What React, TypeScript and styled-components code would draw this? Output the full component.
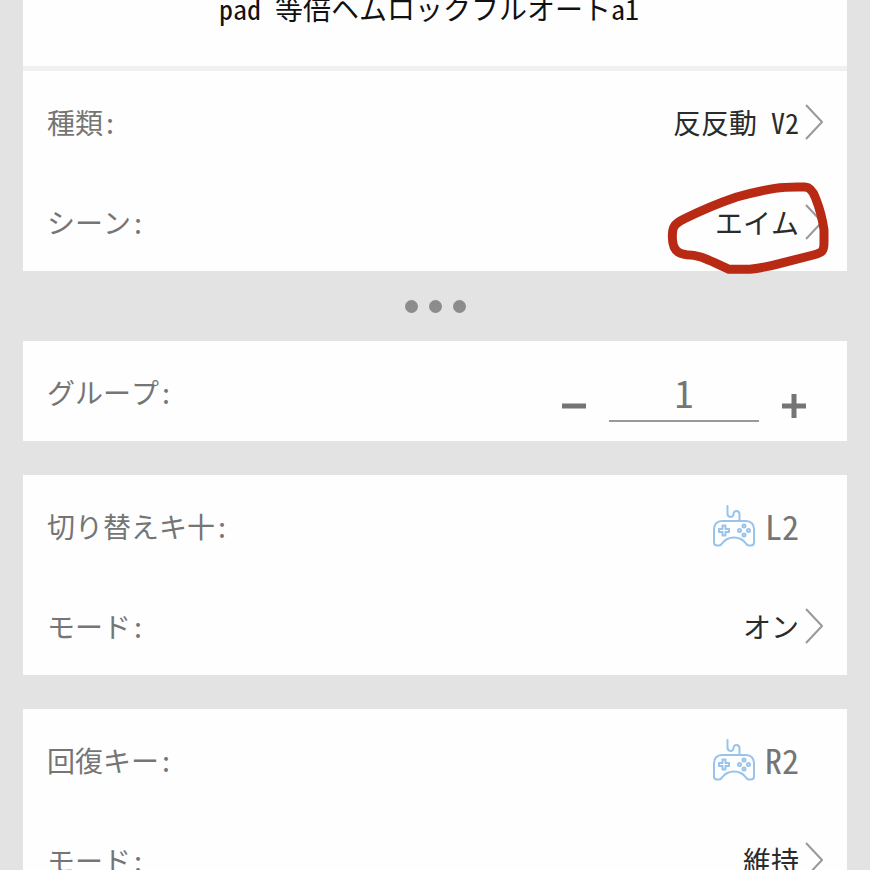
import React, { useState } from "react";
import styled, { createGlobalStyle } from "styled-components";

const GlobalStyle = createGlobalStyle`
  *, *::before, *::after { box-sizing: border-box; }
  html { scrollbar-width: none; }
  body {
    margin: 0;
    background: #e3e3e3;
    font-family: "Noto Sans Mono CJK JP", "Noto Sans CJK JP", "Liberation Mono", sans-serif;
    font-size: 28px;
    color: #2b2b2b;
  }
  button, input { font: inherit; color: inherit; border: 0; padding: 0; background: none; }
  button { cursor: pointer; }
`;

const Page = styled.main`
  height: 100vh;
  padding: 0 23px;
  overflow: hidden auto;
  scrollbar-width: none;
`;

const Card = styled.section`
  background: #fefefe;
  margin-bottom: 34px;
`;

const TopCard = styled(Card)`
  margin-bottom: 0;
`;

const Title = styled.h1`
  margin: 0;
  height: 71px;
  border-bottom: 5px solid #f0f0f0;
  font-size: 28px;
  font-weight: 400;
  line-height: 16px;
  text-align: center;
  color: #111;
  padding-right: 12px;
`;

const Row = styled.div`
  position: relative;
  display: flex;
  align-items: center;
  justify-content: space-between;
  height: 100px;
  padding: 2px 24px 0;
`;

const Label = styled.label`
  color: #757575;
  line-height: 40px;
`;

const Picker = styled.button`
  display: flex;
  align-items: center;
  gap: 6px;
  line-height: 40px;
`;

const KeyButton = styled.button`
  display: flex;
  align-items: center;
  gap: 10px;
  margin-right: 24px;
  font-size: 34px;
  line-height: 40px;
  color: #757575;
`;

const More = styled.button`
  display: flex;
  align-items: center;
  justify-content: center;
  gap: 11px;
  width: 100%;
  height: 70px;
`;

const Dot = styled.span`
  width: 13px;
  height: 13px;
  border-radius: 50%;
  background: #8c8c8c;
`;

const Stepper = styled.div`
  display: flex;
  align-self: flex-end;
  align-items: flex-end;
  gap: 23px;
  margin: 0 17px 19px 0;
  color: #757575;
`;

const StepButton = styled.button`
  display: flex;
  align-items: center;
  width: 24px;
  height: 32px;
`;

const NumberField = styled.input`
  width: 150px;
  height: 56px;
  && { padding-bottom: 4px; }
  border-bottom: 2px solid #999;
  border-radius: 0;
  font-size: 38px;
  line-height: 50px;
  text-align: center;
  outline: none;
`;

const Marker = styled.svg`
  position: absolute;
  top: 9px;
  right: 18px;
  pointer-events: none;
`;

function Chevron() {
  return (
    <svg width="18" height="36" viewBox="0 0 18 36" fill="none" stroke="#999" strokeWidth="2" aria-hidden="true">
      <path d="M1 1 17 18 1 35" />
    </svg>
  );
}

function Gamepad() {
  return (
    <svg width="42" height="42" viewBox="0 0 42 42" fill="none" stroke="#97c3ec" strokeWidth="2" strokeLinecap="round" strokeLinejoin="round" aria-hidden="true">
      <path d="M14.500 1V8.500C14.500 13 20.500 13 20.500 9C20.500 5 26.500 5 26.500 9.500V16" />
      <path d="M9 16H33C38 16 41 19.500 41 24V37.500Q41 40.500 38 40.500H36Q34 40.500 33 38.500C30 34.500 26 32.500 21 32.500S12 34.500 9 38.500Q8 40.500 6 40.500H4Q1 40.500 1 37.500V24C1 19.500 4 16 9 16Z" />
      <path d="M9.500 20.500h3v3.500h3.500v3h-3.500v3.500h-3V27H6v-3h3.500Z" />
      <circle cx="31" cy="21" r="1.500" />
      <circle cx="31" cy="30" r="1.500" />
      <circle cx="26.500" cy="25.500" r="1.500" />
      <circle cx="35.500" cy="25.500" r="1.500" />
    </svg>
  );
}

function PickerRow({ id, label, value, children }: { id: string; label: string; value: string; children?: React.ReactNode }) {
  return (
    <Row>
      <Label htmlFor={id}>{label}</Label>
      <Picker id={id} type="button">
        {value}
        <Chevron />
      </Picker>
      {children}
    </Row>
  );
}

function KeyRow({ id, label, value }: { id: string; label: string; value: string }) {
  return (
    <Row>
      <Label htmlFor={id}>{label}</Label>
      <KeyButton id={id} type="button">
        <Gamepad />
        {value}
      </KeyButton>
    </Row>
  );
}

export default function App() {
  const [group, setGroup] = useState(1);
  return (
    <>
      <GlobalStyle />
      <Page>
        <TopCard>
          <Title>pad 等倍ヘムロックフルオートa1</Title>
          <PickerRow id="kind" label="種類:" value="反反動 V2" />
          <PickerRow id="scene" label="シーン:" value="エイム">
            <Marker width="163" height="96" viewBox="48 270 489 288" fill="none" stroke="#b92a14" strokeWidth="27" strokeLinejoin="round" aria-hidden="true">
              <path d="M465 291C430 290 400 291 375 295Q320 304 260 321Q180 348 100 388C70 402 67 415 67 440C67 475 80 492 110 494C150 494 170 508 237 538H300Q350 532 400 518L490 495C520 488 522 480 522 455V420Q515 370 497 325Q485 292 465 291Z" />
            </Marker>
          </PickerRow>
        </TopCard>
        <More type="button" aria-label="詳細">
          <Dot />
          <Dot />
          <Dot />
        </More>
        <Card>
          <Row>
            <Label htmlFor="group">グループ:</Label>
            <Stepper>
              <StepButton type="button" aria-label="減らす" onClick={() => setGroup(group - 1)}>
                <svg width="24" height="24" viewBox="0 0 24 24" stroke="currentColor" strokeWidth="5">
                  <path d="M0 12H24" />
                </svg>
              </StepButton>
              <NumberField id="group" inputMode="numeric" value={group} onChange={(e) => setGroup(Number(e.target.value) || 0)} />
              <StepButton type="button" aria-label="増やす" onClick={() => setGroup(group + 1)}>
                <svg width="24" height="24" viewBox="0 0 24 24" stroke="currentColor" strokeWidth="5">
                  <path d="M0 12H24M12 0V24" />
                </svg>
              </StepButton>
            </Stepper>
          </Row>
        </Card>
        <Card>
          <KeyRow id="switch-key" label="切り替えキ十:" value="L2" />
          <PickerRow id="switch-mode" label="モード:" value="オン" />
        </Card>
        <Card>
          <KeyRow id="restore-key" label="回復キー:" value="R2" />
          <PickerRow id="restore-mode" label="モード:" value="維持" />
        </Card>
      </Page>
    </>
  );
}
